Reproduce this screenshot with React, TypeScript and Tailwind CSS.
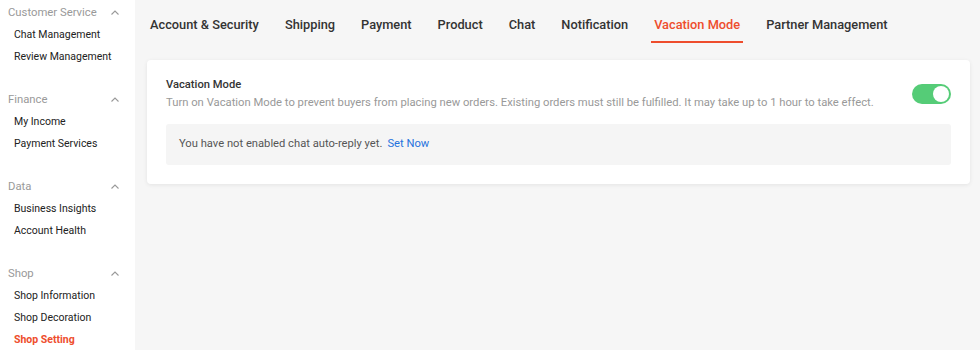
import React from 'react'

type Group = { title: string; items: string[] }

const groups: Group[] = [
    { title: 'Customer Service', items: ['Chat Management', 'Review Management'] },
    { title: 'Finance', items: ['My Income', 'Payment Services'] },
    { title: 'Data', items: ['Business Insights', 'Account Health'] },
    { title: 'Shop', items: ['Shop Information', 'Shop Decoration', 'Shop Setting'] },
]

const tabs = ['Account & Security', 'Shipping', 'Payment', 'Product', 'Chat', 'Notification', 'Vacation Mode', 'Partner Management']

const ChevronUp = () => (
    <svg width="10" height="10" viewBox="0 0 10 10" fill="none" stroke="#999" strokeWidth="1.1">
        <path d="M1.5 6.5 L5 3 L8.5 6.5" />
    </svg>
)

const App = () => {
    return (
        <div className="flex h-[350px] w-[980px] overflow-hidden bg-[#f6f6f6] font-['Roboto',sans-serif]">
            <div className="w-[135px] shrink-0 bg-white pt-[4px]">
                {groups.map((group, index) => (
                    <div key={index} className="mb-[23px]">
                        <div className="flex h-[18px] items-center justify-between pl-[8px] pr-[15px] text-[11.3px] text-[#999]">
                            <span>{group.title}</span>
                            <ChevronUp />
                        </div>
                        <div className="mt-[2px] flex flex-col">
                            {group.items.map((item) => (
                                <div
                                    key={item}
                                    className={
                                        item === 'Shop Setting'
                                            ? 'flex h-[22px] items-center pl-[14px] text-[10.5px] font-bold text-[#ee4d2d]'
                                            : 'flex h-[22px] items-center pl-[14px] text-[10.5px] text-[#222]'
                                    }
                                >
                                    {item}
                                </div>
                            ))}
                        </div>
                    </div>
                ))}
            </div>

            <div className="flex-1 pl-[12px] pr-[10px]">
                <div className="flex h-[43px] items-stretch gap-[20px]">
                    {tabs.map((tab) => (
                        <div
                            key={tab}
                            className={
                                tab === 'Vacation Mode'
                                    ? 'flex items-center border-b-2 border-[#ee4d2d] px-[3px] pt-[9px] text-[12.8px] font-medium text-[#ee4d2d]'
                                    : 'flex items-center border-b-2 border-transparent px-[3px] pt-[9px] text-[12.8px] font-medium text-[#333]'
                            }
                        >
                            {tab}
                        </div>
                    ))}
                </div>

                <div className="mt-[17px] rounded-[4px] bg-white px-[19px] pt-[18px] pb-[19px] shadow-[0_1px_4px_rgba(0,0,0,0.08)]">
                    <div className="flex items-start justify-between">
                        <div>
                            <div className="text-[11.2px] font-medium leading-[14px] text-[#333]">Vacation Mode</div>
                            <div className="mt-[4px] text-[11.25px] leading-[14px] text-[#999]">
                                Turn on Vacation Mode to prevent buyers from placing new orders. Existing orders must still be fulfilled. It may take up to 1 hour to take effect.
                            </div>
                        </div>
                        <div className="mt-[6px] flex h-[20px] w-[39px] items-center justify-end rounded-full bg-[#55cc77] pr-[2px]">
                            <div className="h-[16px] w-[16px] rounded-full bg-white" />
                        </div>
                    </div>
                    <div className="mt-[14px] flex h-[41px] items-center rounded-[3px] bg-[#f5f5f5] px-[13px] text-[11.2px] text-[#555]">
                        <span>You have not enabled chat auto-reply yet.</span>
                        <span className="ml-[5px] text-[#2673dd]">Set Now</span>
                    </div>
                </div>
            </div>
        </div>
    )
}

export default App
